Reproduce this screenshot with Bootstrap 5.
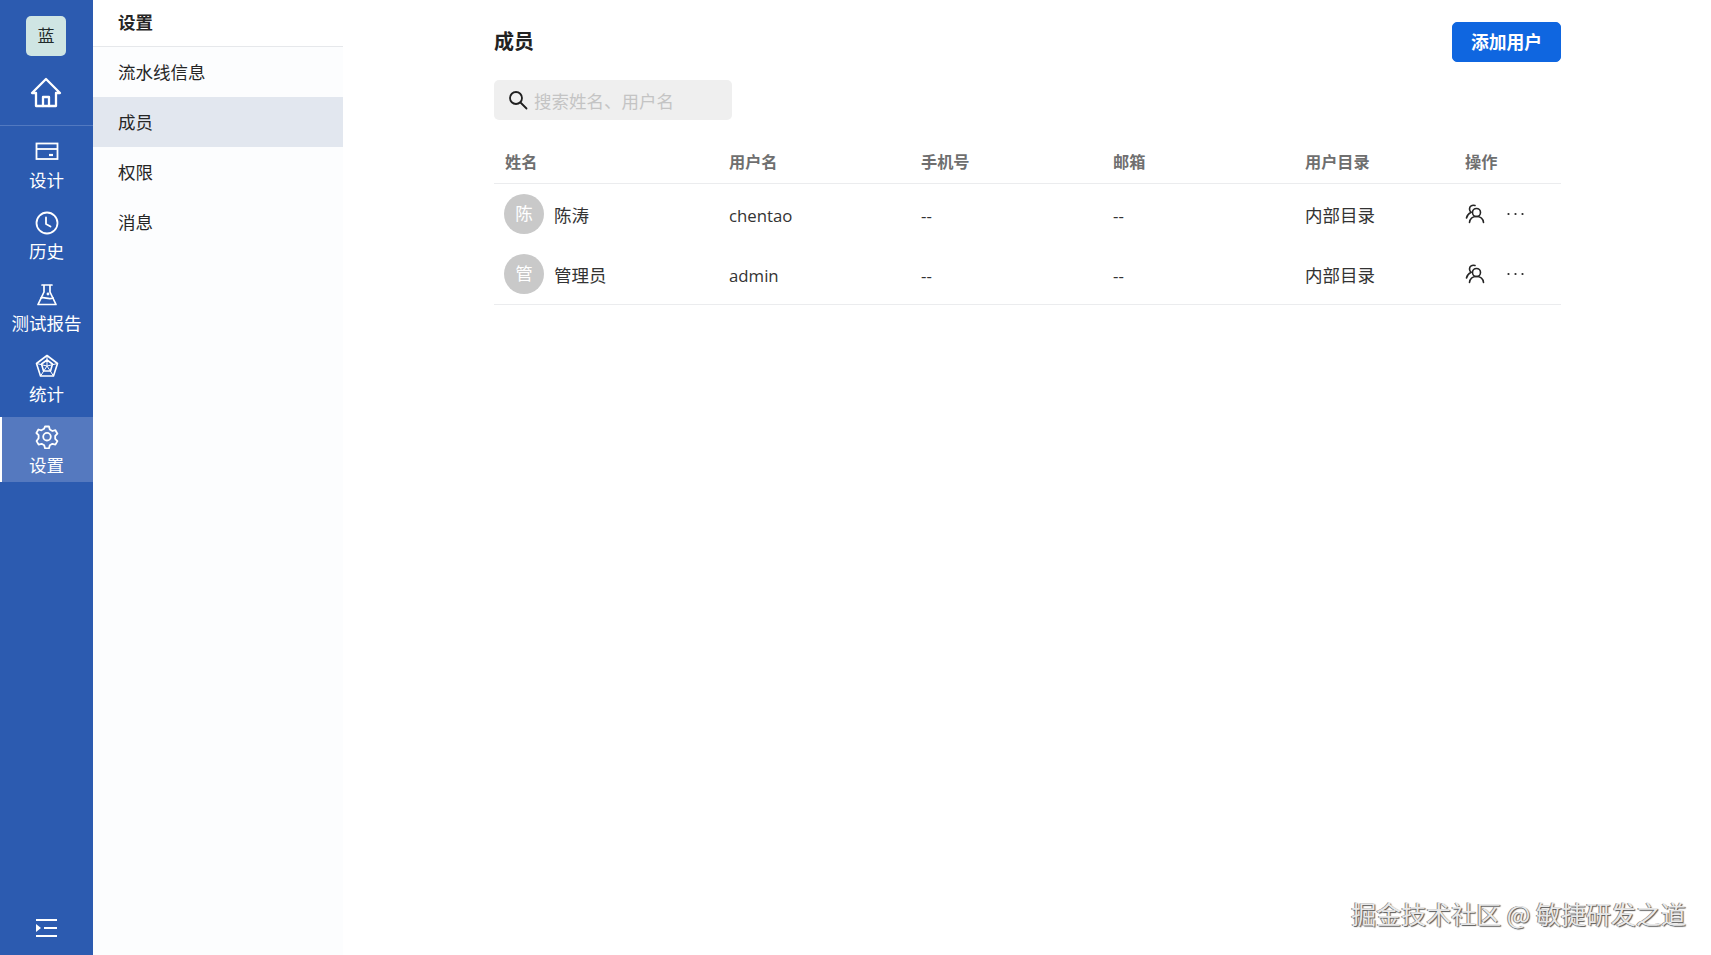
<!DOCTYPE html>
<html lang="zh-CN">
<head>
<meta charset="utf-8">
<title>成员</title>
<link href="https://cdn.jsdelivr.net/npm/bootstrap@5.3.0/dist/css/bootstrap.min.css" rel="stylesheet">
<style>
html,body{height:100%;overflow:hidden}
body{font-family:"Open Sans","Noto Sans CJK SC",sans-serif;color:#262626;background:#fff;font-size:17.5px}
.app-shell{height:955px;position:relative}
.rail{width:93px;background:#2c5bb0;color:#fff;flex:none}
.rail-logo{width:40px;height:40px;margin:16px 0 0 26px;background:#cfe5e3;border-radius:5px;color:#1f2a2a;font-size:17px}
.rail-home{height:70px;border-bottom:1px solid #5279c0;padding:21px 2px 0 0}
.rail-items{padding-top:6px;gap:6px}
.rail-item{height:65.25px;padding-top:8px;font-size:17.5px;line-height:24px;color:#fff;text-decoration:none;border-left:2px solid transparent}
.rail-item svg{display:block;margin:0 auto 4px;position:relative;left:-1px}
.rail-item span{position:relative;left:-1px;display:block;text-align:center}
.rail-item.is-on{background:#5579bf;border-left-color:#fff}
.rail-foot{margin-top:auto;height:42px;padding-left:36px}
.sub-nav{width:250px;background:#fcfdfe;flex:none}
.sub-head{height:47px;line-height:45px;padding-left:25px;font-weight:700;border-bottom:1px solid #e6e8eb;background:#fff}
.sub-link{height:50px;line-height:51px;padding-left:25px;color:#262626;text-decoration:none}
.sub-link.is-on{background:#e2e7ef}
.page-pane{flex:1;padding:22px 150px 0 151px;min-width:0}
.page-head{height:40px}
.page-title{font-size:20px;font-weight:700;margin:0;line-height:42px;color:#222}
.btn-add{width:109px;height:40px;padding:0;background:#0f66e0;border-color:#0f66e0;font-weight:700;font-size:17.8px;border-radius:5px;color:#fff}
.search-box{width:238px;height:40px;margin-top:18px;background:#efefef;border-radius:5px;padding-left:14px;gap:6px}
.search-box input{border:0;background:transparent;outline:0;font-size:17.5px;width:190px;padding:2px 0 0;color:#262626;font-family:inherit}
.search-box input::placeholder{color:#c4c4c4;opacity:1}
.member-table{margin:23px 0 0;table-layout:fixed;width:1067px}
.member-table th{font-size:16.2px;font-weight:700;color:#6f6f6f;height:40px;padding:0 0 2px 11px;vertical-align:middle;border-bottom:1px solid #ebecee}
.member-table td{height:60.5px;padding:4px 0 0 11px;vertical-align:middle;border:0;font-size:17.5px;color:#333}
.member-table tr:last-child td{border-bottom:1px solid #ebecee}
.member-table td.first-cell{padding-left:10px}
.member-table td.latin-cell{font-size:16.8px}
.name-cell{gap:10px;margin-top:-4px}
.name-text{padding-top:4px}
.act-cell{gap:21px;margin-top:-3px}
.face{width:40px;height:40px;border-radius:50%;background:#c9c9c9;color:#fff;font-size:17.5px;flex:none}
.mark-text{position:absolute;right:25px;bottom:25px;font-size:25px;line-height:34px;color:#e9e9e9;text-shadow:1px 1px 1px #555,-1px 0 0 #888;font-family:"Noto Sans CJK SC",sans-serif}
</style>
</head>
<body>
<div class="app-shell d-flex">
  <nav class="rail d-flex flex-column">
    <div class="rail-logo d-flex align-items-center justify-content-center">蓝</div>
    <div class="rail-home d-flex justify-content-center">
      <svg width="32" height="32" viewBox="0 0 32 32" fill="none" stroke="#fff" stroke-width="2.3" stroke-linejoin="round" stroke-linecap="round"><path d="M2 16 16 2l14 14h-4v13H6V16z"/><path d="M13 29v-9h6v9"/></svg>
    </div>
    <div class="rail-items d-flex flex-column">
      <a class="rail-item" href="#"><svg width="24" height="24" viewBox="0 0 24 24" fill="none" stroke="#fff" stroke-width="1.8"><rect x="1.5" y="3.5" width="21" height="15.5"/><path d="M1.500 9h21"/><path d="M14 15h4" stroke-width="2.2"/></svg><span>设计</span></a>
      <a class="rail-item" href="#"><svg width="24" height="24" viewBox="0 0 24 24" fill="none" stroke="#fff" stroke-width="1.8" stroke-linecap="round" stroke-linejoin="round"><circle cx="12" cy="12" r="10.5"/><path d="M11 6.500V13l4.500 2.500"/></svg><span>历史</span></a>
      <a class="rail-item" href="#"><svg width="24" height="24" viewBox="0 0 24 24" fill="none" stroke="#fff" stroke-width="1.7" stroke-linejoin="round" stroke-linecap="round"><path d="M7 2h10M9 2v7L3 21.500h18L15 9V2"/><path d="M6 15c4-1.500 7 2 12 0"/><circle cx="13" cy="11" r=".6" fill="#fff"/></svg><span>测试报告</span></a>
      <a class="rail-item" href="#"><svg width="24" height="24" viewBox="0 0 24 24" fill="none" stroke="#fff" stroke-width="1.6" stroke-linejoin="round"><path d="M12 1.500 22.500 9.500 18.500 22h-13L1.500 9.500z"/><path d="M12 6 17.500 10 15.500 17h-7L6.500 10z"/><path d="M12 1.500V12M22.500 9.500 12 12M18.500 22 12 12M5.500 22 12 12M1.500 9.500 12 12" stroke-width="1"/></svg><span>统计</span></a>
      <a class="rail-item is-on" href="#"><svg width="24" height="24" viewBox="0 0 24 24" fill="none" stroke="#fff" stroke-width="1.8" stroke-linejoin="round"><path d="M10 1.500h4l.8 3 2.600 1.500 3-.8 2 3.500-2.200 2.200v3l2.200 2.200-2 3.500-3-.8-2.600 1.500-.8 3h-4l-.8-3-2.600-1.500-3 .8-2-3.500L3.600 13.200v-3L1.400 8 3.400 4.500l3 .8L9 3.800z"/><circle cx="12" cy="11.700" r="3.800"/></svg><span>设置</span></a>
    </div>
    <div class="rail-foot">
      <svg width="21" height="18" viewBox="0 0 21 18" fill="#fff"><rect x="0" y="0" width="21" height="2"/><rect x="8" y="8" width="13" height="2"/><rect x="0" y="16" width="21" height="2"/><path d="M0 5v8l5-4z"/></svg>
    </div>
  </nav>
  <aside class="sub-nav d-flex flex-column">
    <div class="sub-head">设置</div>
    <a class="sub-link" href="#">流水线信息</a>
    <a class="sub-link is-on" href="#">成员</a>
    <a class="sub-link" href="#">权限</a>
    <a class="sub-link" href="#">消息</a>
  </aside>
  <main class="page-pane">
    <div class="page-head d-flex justify-content-between align-items-center">
      <h1 class="page-title">成员</h1>
      <button type="button" class="btn btn-primary btn-add">添加用户</button>
    </div>
    <div class="search-box d-flex align-items-center">
      <svg width="20" height="20" viewBox="0 0 20 20" fill="none" stroke="#1f1f1f" stroke-width="1.8" stroke-linecap="round"><circle cx="8" cy="8" r="6"/><path d="M12.500 12.500 18.500 18.500"/></svg>
      <input type="text" placeholder="搜索姓名、用户名">
    </div>
    <table class="table member-table">
      <colgroup><col style="width:224px"><col style="width:192px"><col style="width:192px"><col style="width:192px"><col style="width:160px"><col></colgroup>
      <thead><tr><th>姓名</th><th>用户名</th><th>手机号</th><th>邮箱</th><th>用户目录</th><th>操作</th></tr></thead>
      <tbody>
        <tr>
          <td class="first-cell"><div class="d-flex align-items-center name-cell"><div class="face d-flex align-items-center justify-content-center">陈</div><span class="name-text">陈涛</span></div></td>
          <td class="latin-cell">chentao</td><td class="latin-cell">--</td><td class="latin-cell">--</td><td>内部目录</td>
          <td><div class="d-flex align-items-center act-cell"><svg width="20" height="20" viewBox="0 0 20 20" fill="none" stroke="#262626" stroke-width="1.6" stroke-linecap="round"><circle cx="11.500" cy="8.500" r="4"/><path d="M4.500 18.500c.5-4 3-6 7-6s6.500 2 7 6"/><path d="M10 1.500C7 .5 4.500 2.300 4.500 5c0 1.300.5 2.300 1.500 3.200C3.500 9.500 2 11.500 1.500 14"/></svg><svg width="19" height="6" viewBox="0 0 19 6" fill="#262626"><circle cx="2.500" cy="3" r="1.100"/><circle cx="9.500" cy="3" r="1.100"/><circle cx="16.500" cy="3" r="1.100"/></svg></div></td>
        </tr>
        <tr>
          <td class="first-cell"><div class="d-flex align-items-center name-cell"><div class="face d-flex align-items-center justify-content-center">管</div><span class="name-text">管理员</span></div></td>
          <td class="latin-cell">admin</td><td class="latin-cell">--</td><td class="latin-cell">--</td><td>内部目录</td>
          <td><div class="d-flex align-items-center act-cell"><svg width="20" height="20" viewBox="0 0 20 20" fill="none" stroke="#262626" stroke-width="1.6" stroke-linecap="round"><circle cx="11.500" cy="8.500" r="4"/><path d="M4.500 18.500c.5-4 3-6 7-6s6.500 2 7 6"/><path d="M10 1.500C7 .5 4.500 2.300 4.500 5c0 1.300.5 2.300 1.500 3.200C3.500 9.500 2 11.500 1.500 14"/></svg><svg width="19" height="6" viewBox="0 0 19 6" fill="#262626"><circle cx="2.500" cy="3" r="1.100"/><circle cx="9.500" cy="3" r="1.100"/><circle cx="16.500" cy="3" r="1.100"/></svg></div></td>
        </tr>
      </tbody>
    </table>
  </main>
  <div class="mark-text">掘金技术社区 @ 敏捷研发之道</div>
</div>
<script src="https://cdn.jsdelivr.net/npm/bootstrap@5.3.0/dist/js/bootstrap.bundle.min.js"></script>
</body>
</html>
